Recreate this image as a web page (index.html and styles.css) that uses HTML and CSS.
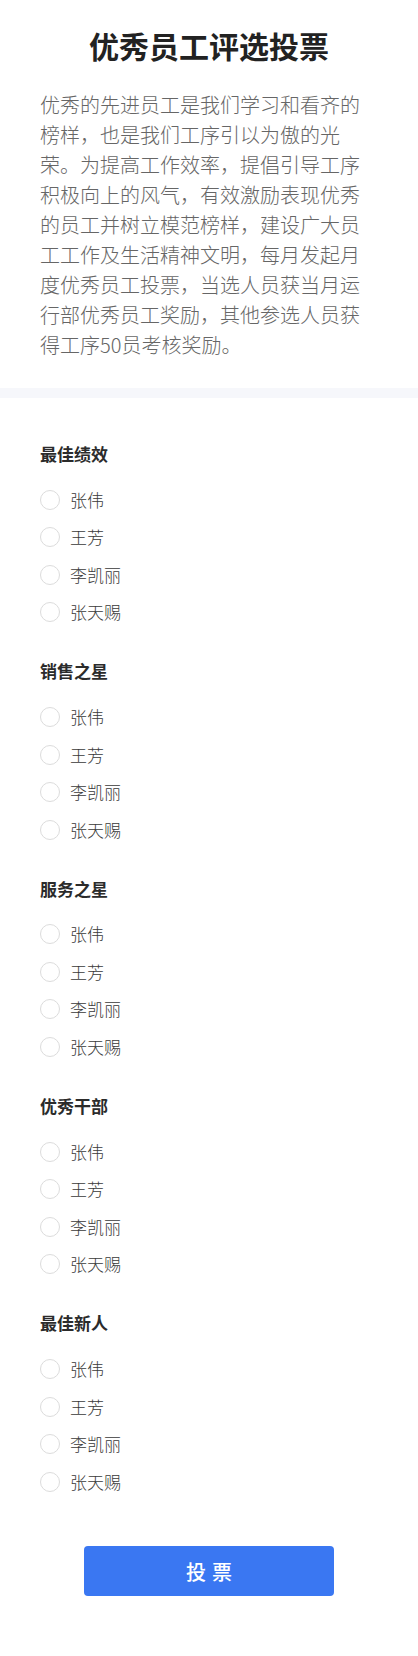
FILE: index.html
```html
<!DOCTYPE html>
<html lang="zh-CN">
<head>
<meta charset="utf-8">
<meta name="viewport" content="width=device-width, initial-scale=1">
<title>优秀员工评选投票</title>
<link rel="stylesheet" href="styles.css">
</head>
<body>
<header class="intro">
  <h1 class="intro-title">优秀员工评选投票</h1>
  <p class="intro-text">优秀的先进员工是我们学习和看齐的榜样，也是我们工序引以为傲的光荣。为提高工作效率，提倡引导工序积极向上的风气，有效激励表现优秀的员工并树立模范榜样，建设广大员工工作及生活精神文明，每月发起月度优秀员工投票，当选人员获当月运行部优秀员工奖励，其他参选人员获得工序50员考核奖励。</p>
</header>
<div class="divider"></div>
<form class="vote">
  <section class="group">
    <h2 class="group-title">最佳绩效</h2>
    <div class="options">
      <label class="option"><input type="radio" name="g1" class="radio"><span class="option-text">张伟</span></label>
      <label class="option"><input type="radio" name="g1" class="radio"><span class="option-text">王芳</span></label>
      <label class="option"><input type="radio" name="g1" class="radio"><span class="option-text">李凯丽</span></label>
      <label class="option"><input type="radio" name="g1" class="radio"><span class="option-text">张天赐</span></label>
    </div>
  </section>
  <section class="group">
    <h2 class="group-title">销售之星</h2>
    <div class="options">
      <label class="option"><input type="radio" name="g2" class="radio"><span class="option-text">张伟</span></label>
      <label class="option"><input type="radio" name="g2" class="radio"><span class="option-text">王芳</span></label>
      <label class="option"><input type="radio" name="g2" class="radio"><span class="option-text">李凯丽</span></label>
      <label class="option"><input type="radio" name="g2" class="radio"><span class="option-text">张天赐</span></label>
    </div>
  </section>
  <section class="group">
    <h2 class="group-title">服务之星</h2>
    <div class="options">
      <label class="option"><input type="radio" name="g3" class="radio"><span class="option-text">张伟</span></label>
      <label class="option"><input type="radio" name="g3" class="radio"><span class="option-text">王芳</span></label>
      <label class="option"><input type="radio" name="g3" class="radio"><span class="option-text">李凯丽</span></label>
      <label class="option"><input type="radio" name="g3" class="radio"><span class="option-text">张天赐</span></label>
    </div>
  </section>
  <section class="group">
    <h2 class="group-title">优秀干部</h2>
    <div class="options">
      <label class="option"><input type="radio" name="g4" class="radio"><span class="option-text">张伟</span></label>
      <label class="option"><input type="radio" name="g4" class="radio"><span class="option-text">王芳</span></label>
      <label class="option"><input type="radio" name="g4" class="radio"><span class="option-text">李凯丽</span></label>
      <label class="option"><input type="radio" name="g4" class="radio"><span class="option-text">张天赐</span></label>
    </div>
  </section>
  <section class="group">
    <h2 class="group-title">最佳新人</h2>
    <div class="options">
      <label class="option"><input type="radio" name="g5" class="radio"><span class="option-text">张伟</span></label>
      <label class="option"><input type="radio" name="g5" class="radio"><span class="option-text">王芳</span></label>
      <label class="option"><input type="radio" name="g5" class="radio"><span class="option-text">李凯丽</span></label>
      <label class="option"><input type="radio" name="g5" class="radio"><span class="option-text">张天赐</span></label>
    </div>
  </section>
  <div class="actions">
    <button type="button" class="submit">投票</button>
  </div>
</form>
</body>
</html>
```
FILE: styles.css
```css
* {
  box-sizing: border-box;
}

html, body {
  margin: 0;
  padding: 0;
  background: #ffffff;
}

body {
  font-family: "Noto Sans CJK SC", "Noto Sans", sans-serif;
  color: #333333;
}

.intro {
  padding: 24px 40px 28px;
}

.intro-title {
  margin: 0;
  font-size: 30px;
  line-height: 42px;
  font-weight: 700;
  color: #222222;
  text-align: center;
}

.intro-text {
  margin: 24px 0 0;
  font-size: 20px;
  line-height: 30px;
  font-weight: 300;
  color: #666666;
}

.divider {
  height: 10px;
  background: #f6f7fb;
}

.vote {
  display: flex;
  flex-direction: column;
  padding: 43.8px 0 60px;
}

.group {
  padding: 0 40px;
}

.group + .group {
  margin-top: 28.25px;
}

.group-title {
  margin: 0 0 15.15px;
  font-size: 17px;
  line-height: 24px;
  font-weight: 700;
  color: #2b2b2b;
}

.options {
  display: flex;
  flex-direction: column;
}

.option {
  height: 37.5px;
  display: flex;
  align-items: center;
  gap: 10px;
}

.radio {
  appearance: none;
  -webkit-appearance: none;
  margin: 0;
  width: 20px;
  height: 20px;
  flex: 0 0 20px;
  border: 1px solid #dcdcdc;
  border-radius: 50%;
  background: #ffffff;
}

.option-text {
  font-size: 17px;
  line-height: 24px;
  font-weight: 300;
  color: #3a3a3a;
}

.actions {
  margin-top: 45.5px;
  display: flex;
  justify-content: center;
}

.submit {
  width: 250px;
  height: 50px;
  border: none;
  border-radius: 4px;
  background: #3a77f2;
  color: #ffffff;
  font-family: "Noto Sans CJK SC", "Noto Sans", sans-serif;
  font-size: 20px;
  font-weight: 500;
  letter-spacing: 6px;
  text-indent: 6px;
  padding: 0;
}
```
